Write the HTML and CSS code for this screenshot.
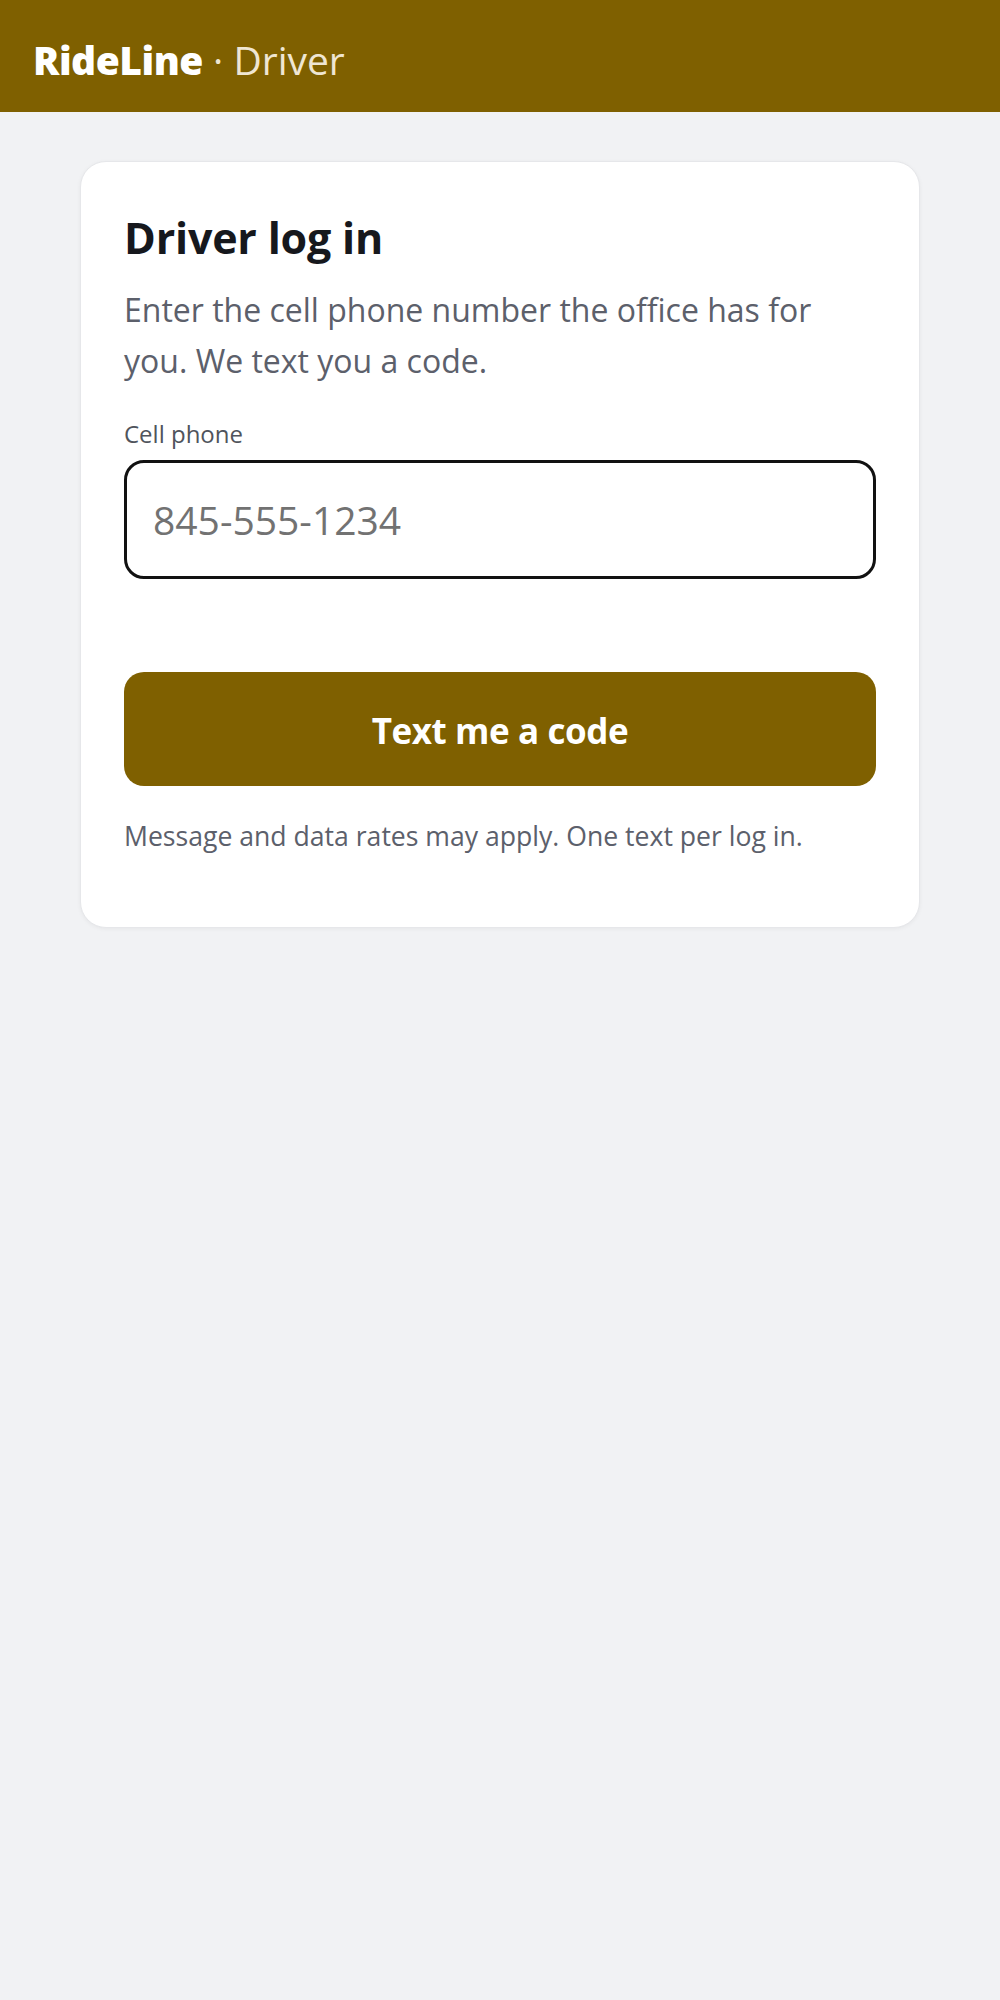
FILE: index.html
```html
<!DOCTYPE html>
<html lang="en">
<head>
<meta charset="utf-8">
<title>RideLine · Driver log in</title>
<link rel="stylesheet" href="styles.css">
</head>
<body>
<header class="topbar">
  <span class="brand">RideLine</span><span class="brand-sub">&nbsp;· Driver</span>
</header>
<main class="page">
  <section class="card">
    <h1 class="card-title">Driver log in</h1>
    <p class="lead">Enter the cell phone number the office has for you. We text you a code.</p>
    <form class="login-form">
      <label class="field-label" for="phone">Cell phone</label>
      <input class="field-input" id="phone" type="tel" placeholder="845-555-1234">
      <button class="primary-btn" type="button">Text me a code</button>
    </form>
    <p class="fine-print">Message and data rates may apply. One text per log in.</p>
  </section>
</main>
</body>
</html>
```
FILE: styles.css
```css
* { box-sizing: border-box; }

html, body {
  margin: 0;
  padding: 0;
}

body {
  background: #f1f2f4;
  font-family: "Open Sans", "Noto Sans", "Liberation Sans", sans-serif;
  min-height: 2000px;
}

.topbar {
  height: 112px;
  background: #7f6000;
  display: flex;
  align-items: center;
  padding: 7px 33px 0;
  font-size: 39px;
  line-height: 1;
}

.brand {
  color: #ffffff;
  font-weight: 800;
  letter-spacing: -0.5px;
}

.brand-sub {
  color: #efe6d2;
  font-weight: 400;
}

.page {
  padding: 49px 80px 0;
}

.card {
  max-width: 840px;
  margin: 0 auto;
  background: #ffffff;
  border: 1px solid #e6e7ea;
  border-radius: 26px;
  box-shadow: 0 1px 4px rgba(0, 0, 0, 0.05);
  padding: 50px 43px 73px;
}

.card-title {
  margin: 0 0 20px;
  font-size: 43px;
  line-height: 1.2;
  font-weight: 700;
  color: #16181d;
  letter-spacing: -0.2px;
}

.lead {
  margin: 0 0 33px;
  font-size: 32px;
  line-height: 51px;
  color: #5c606b;
}

.login-form {
  display: flex;
  flex-direction: column;
}

.field-label {
  display: block;
  font-size: 24px;
  line-height: 30px;
  color: #50545c;
  margin-bottom: 11px;
}

.field-input {
  height: 119px;
  width: 100%;
  border: 3px solid #111111;
  border-radius: 20px;
  padding: 0 26px;
  font-family: inherit;
  font-size: 39px;
  color: #222;
  background: #fff;
  outline: none;
}

.field-input::placeholder {
  color: #727272;
}

.primary-btn {
  margin-top: 93px;
  height: 114px;
  width: 100%;
  border: none;
  border-radius: 20px;
  background: #7f6000;
  color: #ffffff;
  font-family: inherit;
  font-size: 35px;
  font-weight: 700;
  letter-spacing: -0.4px;
  padding-top: 4px;
  cursor: pointer;
}

.fine-print {
  margin: 32px 0 0;
  font-size: 26.6px;
  line-height: 36px;
  color: #5c606b;
}
```
